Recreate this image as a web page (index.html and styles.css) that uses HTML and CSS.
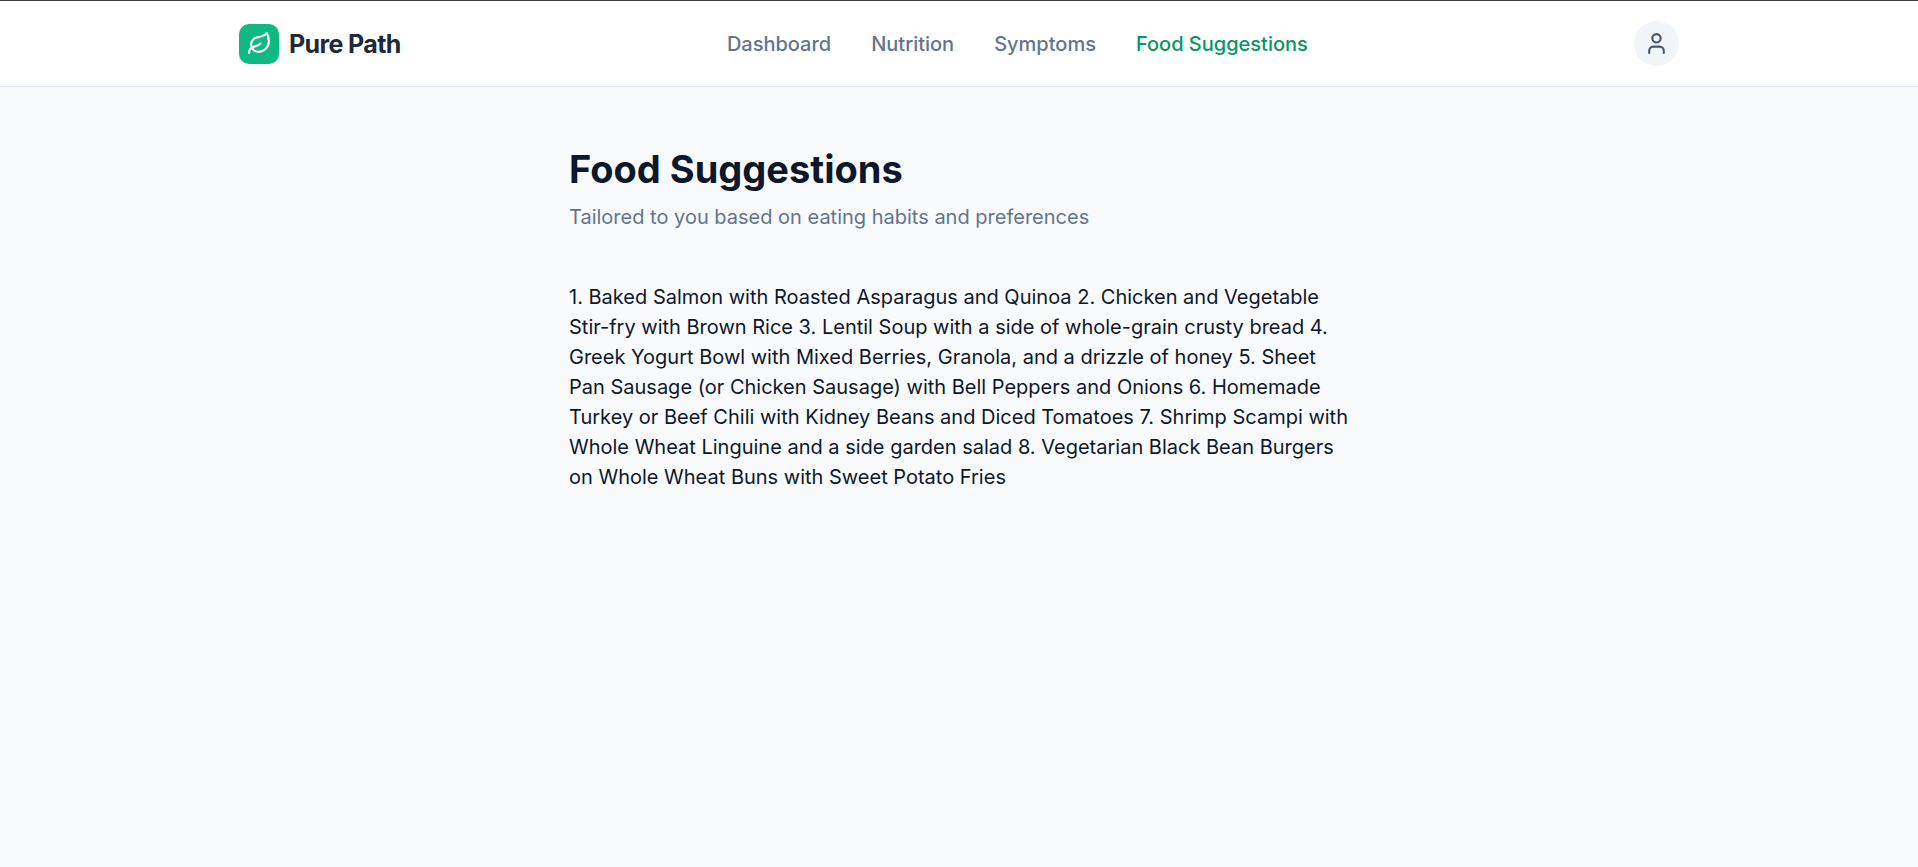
FILE: index.html
```html
<!DOCTYPE html>
<html lang="en">
<head>
  <meta charset="UTF-8">
  <meta name="viewport" content="width=device-width, initial-scale=1.0">
  <title>Pure Path</title>
  <link rel="stylesheet" href="styles.css">
</head>
<body>
  <!-- Header -->
  <header class="header">
    <div class="header-content">
      <a href="#" class="logo">
        <span class="logo-icon">
          <svg viewBox="0 0 24 24" aria-hidden="true">
            <path d="M11 20A7 7 0 0 1 9.8 6.1C15.5 5 17 4.48 19 2c1 2 2 4.18 2 8 0 5.5-4.78 10-10 10Z"/>
            <path d="M2 21c0-3 1.85-5.36 5.08-6C9.5 14.52 12 13 13 12"/>
          </svg>
        </span>
        <span class="logo-text">Pure Path</span>
      </a>

      <nav class="nav">
        <a href="#" class="nav-link">Dashboard</a>
        <a href="#" class="nav-link">Nutrition</a>
        <a href="#" class="nav-link">Symptoms</a>
        <a href="#" class="nav-link active">Food Suggestions</a>
      </nav>

      <button type="button" class="profile-button" aria-label="Profile">
        <svg viewBox="0 0 24 24" aria-hidden="true">
          <path d="M19 21v-2a4 4 0 0 0-4-4H9a4 4 0 0 0-4 4v2"/>
          <circle cx="12" cy="7" r="4"/>
        </svg>
      </button>
    </div>
  </header>

  <!-- Suggestions -->
  <main class="main">
    <h1 class="page-title">Food Suggestions</h1>
    <p class="page-subtitle">Tailored to you based on eating habits and preferences</p>
    <p class="suggestions">
      1. Baked Salmon with Roasted Asparagus and Quinoa
      2. Chicken and Vegetable Stir-fry with Brown Rice
      3. Lentil Soup with a side of whole-grain crusty bread
      4. Greek Yogurt Bowl with Mixed Berries, Granola, and a drizzle of honey
      5. Sheet Pan Sausage (or Chicken Sausage) with Bell Peppers and Onions
      6. Homemade Turkey or Beef Chili with Kidney Beans and Diced Tomatoes
      7. Shrimp Scampi with Whole Wheat Linguine and a side garden salad
      8. Vegetarian Black Bean Burgers on Whole Wheat Buns with Sweet Potato Fries
    </p>
  </main>
</body>
</html>
```
FILE: styles.css
```css
* {
  margin: 0;
  padding: 0;
  box-sizing: border-box;
}

body {
  min-height: 100vh;
  font-family: "Inter", sans-serif;
  font-size: 20px;
  line-height: 30px;
  color: #0f172a;
  background: #f8fafc;
}

.header {
  background: #fff;
  border-top: 1px solid #3c4043;
  border-bottom: 1px solid #e2e8f0;
}

.header-content {
  display: flex;
  justify-content: space-between;
  align-items: center;
  max-width: 1440px;
  margin: 0 auto;
  padding: 20px 0;
}

.logo {
  display: flex;
  align-items: center;
  gap: 10px;
  text-decoration: none;
}

.logo-icon {
  display: flex;
  justify-content: center;
  align-items: center;
  width: 40px;
  height: 40px;
  background: #10b981;
  border-radius: 10px;
  color: #fff;
}

svg {
  width: 25px;
  height: 25px;
  fill: none;
  stroke: currentColor;
  stroke-width: 2;
  stroke-linecap: round;
  stroke-linejoin: round;
}

.logo-text {
  font-size: 25px;
  font-weight: 700;
  letter-spacing: -0.025em;
  color: #1e293b;
}

.nav {
  display: flex;
  gap: 40px;
}

.nav-link {
  font-weight: 500;
  color: #64748b;
  text-decoration: none;
}

.nav-link.active {
  color: #059669;
}

.profile-button {
  display: flex;
  justify-content: center;
  align-items: center;
  width: 45px;
  height: 45px;
  border: none;
  border-radius: 50%;
  background: #f1f5f9;
  color: #475569;
  cursor: pointer;
}

.main {
  max-width: 780px;
  margin: 0 auto;
  padding: 60px 0;
}

.page-title {
  font-size: 38px;
  line-height: 45px;
  font-weight: 700;
  margin-bottom: 10px;
}

.page-subtitle {
  color: #64748b;
  margin-bottom: 50px;
}
```
